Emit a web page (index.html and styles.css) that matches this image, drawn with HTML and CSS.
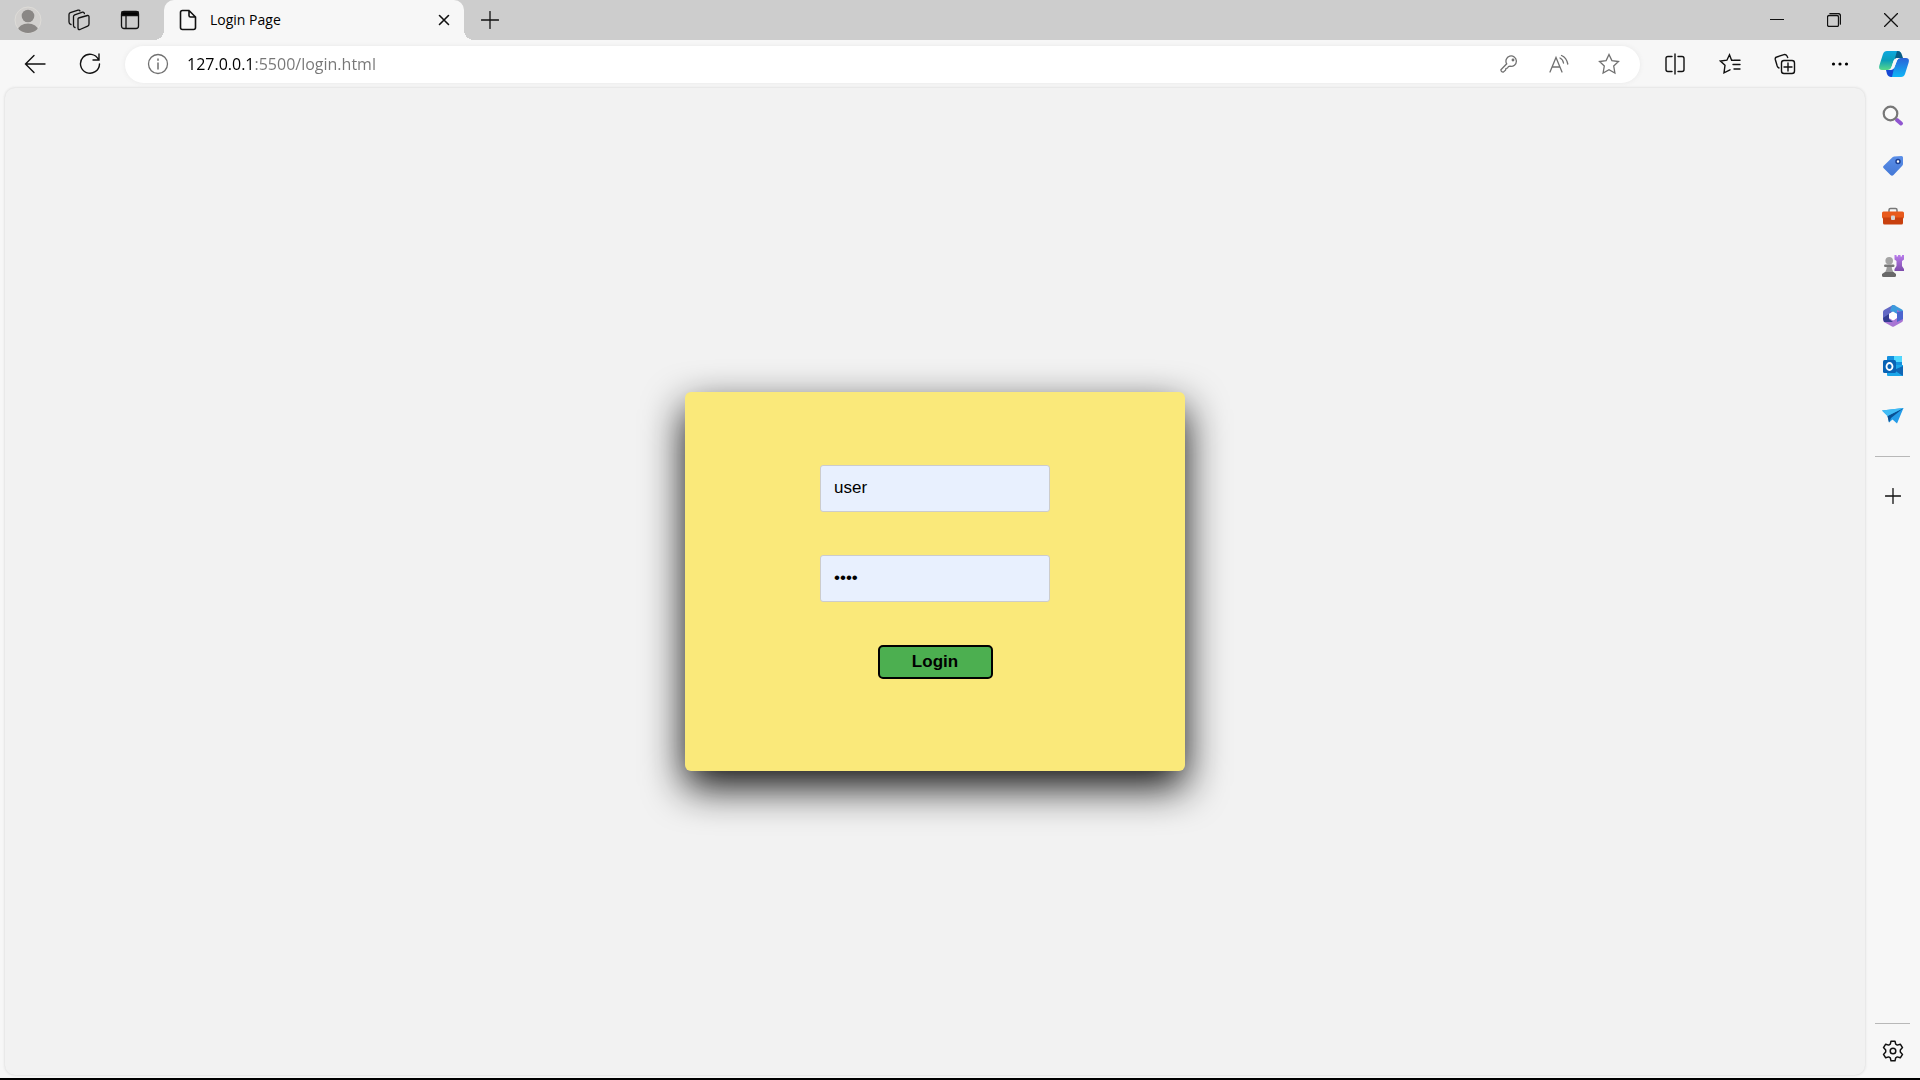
FILE: index.html
```html
<!DOCTYPE html>
<html lang="en">
<head>
<meta charset="utf-8">
<title>Login Page</title>
<link rel="stylesheet" href="styles.css">
</head>
<body>
<div class="browser">
  <header class="titlebar">
    <button class="tool avatar" aria-label="Profile">
      <svg width="28" height="28" viewBox="0 0 28 28"><defs><clipPath id="face"><circle cx="14" cy="14" r="13"/></clipPath></defs><circle cx="14" cy="14" r="13" fill="#d2d0ce" stroke="#dedcd8"/><circle cx="14" cy="10" r="6.300" fill="#8a8785"/><ellipse cx="14" cy="24" rx="10" ry="6.500" fill="#8a8785" clip-path="url(#face)"/></svg>
    </button>
    <button class="tool" aria-label="Workspaces">
      <svg class="line" width="22" height="22" viewBox="0 0 22 22"><path d="M10.500 9 19.500 6.500Q21 6.200 21 7.700V15Q21 16.500 19.700 17.100L12 20.500Q10 21 10 19V10Q10 9.200 10.500 9Z"/><path d="M7 18.500Q5.500 18.200 5.500 16.500V7.500Q5.500 6.300 6.700 5.800L14.500 3.200Q16 2.900 16.400 4.500"/><path d="M3 15.500Q1 15 1 13V5.500Q1 4.200 2.300 3.700L10 1.200Q11.600.800 12 2"/></svg>
    </button>
    <button class="tool" aria-label="Tab actions">
      <svg class="line" width="20" height="20" viewBox="0 0 20 20"><rect x="1.500" y="1.500" width="17" height="17" rx="2.500"/><path d="M2 2H18V5.500H2Z" fill="#000"/><path d="M6 6V18"/></svg>
    </button>
    <div class="tab">
      <svg class="line" width="18" height="22" viewBox="0 0 18 22"><path d="M3.500 1.500H10L16.500 8V18.500Q16.500 20.500 14.500 20.500H3.500Q1.500 20.500 1.500 18.500V3.500Q1.500 1.500 3.500 1.500ZM10 1.500V6.500Q10 8 11.500 8H16.500" stroke-width="1.600"/></svg>
      <span class="tab-title">Login Page</span>
      <button class="tab-close" aria-label="Close tab"><svg class="line" width="12" height="12" viewBox="0 0 12 12"><path d="M1.500 1.500 10.500 10.500M10.500 1.500 1.500 10.500" stroke-width="1.600"/></svg></button>
    </div>
    <button class="tool" aria-label="New tab"><svg class="line" width="18" height="18" viewBox="0 0 18 18"><path d="M9 .500V17.500M.500 9H17.500"/></svg></button>
    <div class="window-controls">
      <button aria-label="Minimize"><svg class="line" width="14" height="14" viewBox="0 0 14 14"><path d="M0 6.500H14" stroke-width="1"/></svg></button>
      <button aria-label="Restore"><svg class="line" width="14" height="14" viewBox="0 0 14 14"><rect x=".5" y="2.500" width="11" height="11" rx="1.500"/><path d="M3 .500H11Q13.500.500 13.500 3V11"/></svg></button>
      <button aria-label="Close"><svg class="line" width="14" height="14" viewBox="0 0 14 14"><path d="M.5.500 13.500 13.500M13.500.500.500 13.500"/></svg></button>
    </div>
  </header>

  <nav class="toolbar" aria-label="Browser toolbar">
    <button class="nav-button" aria-label="Back"><svg class="line" width="22" height="20" viewBox="0 0 22 20"><path d="M21 10H1.500M10 1.500 1.500 10 10 18.500" stroke-width="1.400"/></svg></button>
    <button class="nav-button" aria-label="Refresh"><svg class="line" width="22" height="22" viewBox="0 0 22 22"><path d="M19.500 6.500A9.500 9.500 0 1 0 20.500 11M20 1V7H14" stroke-width="1.400"/></svg></button>
    <div class="address">
      <button aria-label="Site information"><svg class="line gray" width="22" height="22" viewBox="0 0 22 22"><circle cx="11" cy="11" r="9.500"/><path d="M11 10V16M11 6V7.200" stroke-width="1.500"/></svg></button>
      <input class="url" type="text" value="127.0.0.1:5500/login.html" aria-label="Address">
      <button aria-label="Password key"><svg class="line gray" width="18" height="18" viewBox="0 0 18 18"><path d="M6.700 8.800A5.200 5.200 0 1 1 10 11.200L8.500 11.500 7.500 13 6 13.500 5.500 15.200 3.500 17Q1 17.300.900 14.800Z"/><circle cx="13" cy="5" r=".8"/></svg></button>
      <button aria-label="Read aloud"><svg class="line gray" width="20" height="20" viewBox="0 0 20 20"><path d="M1 18 7 3.500 13 18M3.200 13H10.800M11 4Q14 5.500 14.500 9M12.500 1.500Q17.500 3.500 18.800 10"/></svg></button>
      <button aria-label="Add to favorites"><svg class="line gray" width="22" height="22" viewBox="0 0 22 22"><path d="M11 1.500 13.900 7.600 20.500 8.500 15.700 13.100 16.900 20 11 16.800 5.100 20 6.300 13.100 1.500 8.500 8.100 7.600Z"/></svg></button>
    </div>
    <div class="toolbar-actions">
      <button aria-label="Split screen"><svg class="line" width="22" height="22" viewBox="0 0 22 22"><path d="M11 1V21M8 3.500H4Q2 3.500 2 5.500V16.500Q2 18.500 4 18.500H8M14 3.500H18Q20 3.500 20 5.500V16.500Q20 18.500 18 18.500H14" stroke-width="1.400"/></svg></button>
      <button aria-label="Favorites"><svg class="line" width="22" height="22" viewBox="0 0 22 22"><path d="M14 7.200H12.600L10.500 1.800 7.900 7.200 1.500 8.100 6 12.300 5 19.800 11 16.800M15 7.200H21M14 11.500H21M15 16H21" stroke-width="1.400"/></svg></button>
      <button aria-label="Collections"><svg class="line" width="22" height="22" viewBox="0 0 22 22"><path d="M5 15Q3.700 14.500 3.200 13L1.300 6.500Q.800 4.500 2.700 4L10 1.600Q12 1.200 13 3L13.700 4.500" stroke-width="1.400"/><rect x="7.500" y="7.500" width="13" height="13" rx="2.500" stroke-width="1.400"/><path d="M14 10V18M10 14H18" stroke-width="1.400"/></svg></button>
      <button aria-label="More"><svg width="18" height="6" viewBox="0 0 18 6"><circle cx="2.500" cy="3" r="1.600"/><circle cx="9" cy="3" r="1.600"/><circle cx="15.500" cy="3" r="1.600"/></svg></button>
    </div>
    <button class="copilot" aria-label="Copilot"><svg width="30" height="28" viewBox="0 0 30 28"><defs><linearGradient id="cpA" x2="0" y2="1"><stop stop-color="#0ea8df"/><stop offset=".5" stop-color="#0c9fb9"/><stop offset="1" stop-color="#58d989"/></linearGradient><linearGradient id="cpB" x2="0" y2="1"><stop stop-color="#2a62d8"/><stop offset="1" stop-color="#10b6f6"/></linearGradient></defs><path d="M8 1H19Q22 1 22 5L21 8H18Q15.500 8 14.500 11L12.500 17Q11.500 20 9 20H3Q-1 20 .5 15L4 4Q5 1 8 1Z" fill="url(#cpA)"/><path d="M18 1Q22 1 23 5L24 8H20Q17 8 15.500 10Z" fill="#095c86"/><path d="M21.500 8H27Q31 8 29.500 13L26 24Q25 27 22 27H12Q9 27 8 20H11Q14.500 20 15.500 17L18 10.500Q19 8 21.500 8Z" fill="url(#cpB)"/><path d="M7 20H10Q13.500 20 15 18L13 27Q9 27 8 24Z" fill="#1648d4"/><path d="M20.500 8H17.500Q15.500 8.500 14.500 11L12.500 17Q11.500 20 9 20H11Q14.500 20 15.500 17L18 10.500Q19 8 20.500 8Z" fill="#f7f7f7"/></svg></button>
  </nav>

  <div class="workspace">
    <main class="page">
      <form class="login-card">
        <input class="field" type="text" name="username" value="user" aria-label="Username">
        <input class="field" type="password" name="password" value="user" aria-label="Password">
        <button class="login-button" type="button">Login</button>
      </form>
    </main>
    <aside class="sidebar">
      <button aria-label="Search"><svg width="22" height="22" viewBox="0 0 22 22"><path d="M15 15 19 18.500" stroke="#9056d0" stroke-width="4" stroke-linecap="round"/><circle cx="8.500" cy="8.500" r="6.800" fill="#fafafa" stroke="#777" stroke-width="2.200"/></svg></button>
      <button aria-label="Shopping"><svg width="22" height="22" viewBox="0 0 22 22"><defs><linearGradient id="tg" x2="0" y2="1"><stop stop-color="#5b8fe8"/><stop offset="1" stop-color="#4478d6"/></linearGradient></defs><path d="M12 1.500 19.500 1Q21 1 21 2.500V9Q21 10 20 11L11.500 20Q10 21.500 8.500 20L1.500 13Q.500 12 1.500 11L10.500 2.200Z" fill="url(#tg)"/><circle cx="16" cy="6.500" r="2" fill="#fff" stroke="#1c3f91" stroke-width="1.500"/></svg></button>
      <button aria-label="Tools"><svg width="22" height="18" viewBox="0 0 22 18"><path d="M7 5V3Q7 1.500 8.500 1.500H13.500Q15 1.500 15 3V5" fill="none" stroke="#777" stroke-width="1.500"/><rect y="4.500" width="22" height="7" rx="1.500" fill="#e85a1c"/><path d="M1 10.500H21V16Q21 17.500 19.500 17.500H2.500Q1 17.500 1 16Z" fill="#c8400e"/><rect x="9" y="8.500" width="4" height="4.500" rx="1" fill="#d4d4d4"/></svg></button>
      <button aria-label="Games"><svg width="22" height="22" viewBox="0 0 22 22"><defs><linearGradient id="rook" x2="0" y2="1"><stop stop-color="#b97cec"/><stop offset="1" stop-color="#7d4cab"/></linearGradient></defs><path d="M12.500 0H14.500V1.500H16V0H18.500V1.500H20V0H22V4.500L20 6V11L22 14V16H12.500V14L14.500 11V6L12.500 4.500Z" fill="url(#rook)"/><circle cx="7.200" cy="5.800" r="3.800" fill="#a4a4a4"/><path d="M5 10H9.500L10 14 11.500 17.500H3L4.500 14Z" fill="#9a9a9a"/><rect x="2" y="9.500" width="10.500" height="2.500" rx="1.200" fill="#777"/><path d="M3 17H11.500L14 19V20.500Q14 22 12.500 22H1.500Q0 22 0 20.500V19Z" fill="#686868"/></svg></button>
      <button aria-label="Microsoft 365"><svg width="22" height="22" viewBox="0 0 22 22"><path d="M11 0 2 5Q1 6 1 7V15L7 18V9L14 5V1Z" fill="#6268c4"/><path d="M10 0Q11-.5 12 0L20 4.500Q21 5 21 6.500V14L15 13V9L8 6Z" fill="#3d9bdd"/><path d="M21 8V15Q21 16.500 20 17L12 21.500Q11 22 10 21.500L2 17 1 15 8 13 12 15 15 12V5Z" fill="#a875d4"/><path d="M1 13 7 9V14L11 17 2 17Z" fill="#343d91"/><path d="M15 7 21 6V14L15 17Z" fill="#4c65cf"/><path d="M11 6.500 15 9V13L11 15.500 7 13V9Z" fill="#fff"/></svg></button>
      <button aria-label="Outlook"><svg width="22" height="22" viewBox="0 0 22 22"><path d="M6 1H19Q20 1 20 2V12H5V2Q5 1 6 1Z" fill="#1490df"/><path d="M12 1H19Q20 1 20 2V7H12Z" fill="#50d9ff"/><path d="M5 10H21V20Q21 21 20 21H6Q5 21 5 20Z" fill="#1ba6e9"/><path d="M21 11 12 15 21 21Z" fill="#1066b5"/><rect x="1" y="5" width="13" height="13" rx="1.500" fill="#0963b5"/><ellipse cx="7.500" cy="11.500" rx="3" ry="3.500" fill="none" stroke="#fff" stroke-width="1.800"/></svg></button>
      <button aria-label="Drop"><svg width="22" height="18" viewBox="0 0 22 18"><path d="M0 3.500 21.500 1 15 16.500 10.500 12.500 7 15.500 5.500 9Z" fill="#249ce8"/><path d="M5.500 9 21.500 1 9 11 7 15.500Z" fill="#0a5093"/><path d="M0 3.500 21.500 1 5.500 9Z" fill="#41bcf5"/></svg></button>
      <hr>
      <button aria-label="Customize"><svg class="line" width="16" height="16" viewBox="0 0 16 16"><path d="M8 .500V15.500M.500 8H15.500"/></svg></button>
      <div class="sidebar-bottom">
        <hr>
        <button aria-label="Settings"><svg class="line" width="22" height="22" viewBox="0 0 22 22"><path d="M9 1.200H13L13.700 4.200 15.300 5.100 18.300 4.200 20.500 7.600 18.300 9.900V12.100L20.500 14.400 18.300 17.800 15.300 16.900 13.700 17.800 13 20.800H9L8.300 17.800 6.700 16.900 3.700 17.800 1.500 14.400 3.700 12.100V9.900L1.500 7.600 3.700 4.200 6.700 5.100 8.300 4.200Z" stroke-width="1.500" stroke-linejoin="round"/><circle cx="11" cy="11" r="2.800" stroke-width="1.500"/></svg></button>
      </div>
    </aside>
  </div>
</div>
</body>
</html>
```
FILE: styles.css
```css
* {
  box-sizing: border-box;
}

body {
  margin: 0;
  background: #f7f7f7;
  color: #000;
  font-family: "Open Sans", "Noto Sans", sans-serif;
}

button {
  display: flex;
  align-items: center;
  justify-content: center;
  margin: 0;
  padding: 0;
  border: 0;
  background: none;
  color: inherit;
}

svg {
  display: block;
  flex: none;
}

.line {
  fill: none;
  stroke: #111;
  stroke-width: 1.3;
  stroke-linecap: round;
}

.gray {
  stroke: #707070;
}

.browser {
  display: flex;
  flex-direction: column;
  min-height: 100vh;
  border-bottom: 2px solid #000;
}

/* Title bar */
.titlebar {
  display: flex;
  height: 40px;
  padding: 0 1px 0 2px;
  background: #cdcdcd;
}

.tool {
  width: 51px;
}

.tab {
  position: relative;
  display: flex;
  align-items: center;
  width: 300px;
  margin-left: 9px;
  padding: 0 12px 0 15px;
  border-radius: 10px 10px 0 0;
  background: #f7f7f7;
}

.tab::before,
.tab::after {
  content: "";
  position: absolute;
  bottom: 0;
  width: 10px;
  height: 10px;
}

.tab::before {
  right: 100%;
  background: radial-gradient(circle at 0 0, #cdcdcd 10px, #f7f7f7 10px);
}

.tab::after {
  left: 100%;
  background: radial-gradient(circle at 100% 0, #cdcdcd 10px, #f7f7f7 10px);
}

.tab-title {
  flex: 1;
  margin-left: 13px;
  font-size: 14px;
  line-height: 20px;
}

.tab-close {
  width: 16px;
  height: 40px;
}

.window-controls {
  display: flex;
  margin-left: auto;
}

.window-controls button {
  width: 57px;
}

/* Toolbar */
.toolbar {
  display: flex;
  align-items: center;
  height: 48px;
  padding-left: 7px;
}

.nav-button {
  width: 55px;
  height: 40px;
}

.address {
  display: flex;
  align-items: center;
  flex: 1;
  height: 37px;
  margin-left: 8px;
  padding: 0 6px 0 16px;
  border-radius: 19px;
  background: #fff;
  box-shadow: 0 0 5px #e8e8e8;
}

.address button {
  width: 50px;
  height: 36px;
}

.address button:first-child {
  width: 34px;
}

/* The host part of the address is black and the rest of it is gray. */
.url {
  flex: 1;
  min-width: 0;
  padding: 0;
  margin-left: 12px;
  border: 0;
  outline: 0;
  background: linear-gradient(to right, #000 67px, #767676 67px);
  background-clip: text;
  -webkit-background-clip: text;
  color: transparent;
  font-family: inherit;
  font-size: 16px;
  line-height: 24px;
}

.toolbar-actions {
  display: flex;
  margin-left: 7px;
}

.toolbar-actions button {
  width: 55px;
  height: 40px;
}

.copilot {
  width: 53px;
  height: 40px;
}

/* Page area and sidebar */
.workspace {
  display: flex;
  flex: 1;
}

.page {
  display: flex;
  align-items: center;
  justify-content: center;
  flex: 1;
  margin: 0 0 3px 5px;
  border-radius: 10px;
  background: #f2f2f2;
  box-shadow: 0 0 3px #d0d0d0;
}

.login-card {
  display: flex;
  flex-direction: column;
  align-items: center;
  gap: 43px;
  width: 500px;
  padding: 73px 20px 92px;
  border-radius: 6px;
  background: #fae97a;
  box-shadow: 0 16px 40px rgba(0, 0, 0, 0.94);
  font-family: "Liberation Sans", Arial, sans-serif;
}

.field {
  width: 230px;
  height: 47px;
  padding: 0 13px 2px;
  border: 1px solid #ccc;
  border-radius: 3px;
  background: #e8f0fe;
  color: #000;
  font-family: inherit;
  font-size: 17px;
}

.login-button {
  width: 115px;
  height: 34px;
  border: 2px solid #000;
  border-radius: 5px;
  background: #4caf50;
  font-family: inherit;
  font-size: 17px;
  font-weight: bold;
}

.sidebar {
  display: flex;
  flex-direction: column;
  align-items: center;
  width: 55px;
  padding: 3px 0 2px;
}

.sidebar button {
  width: 48px;
  height: 50px;
}

.sidebar hr {
  width: 35px;
  height: 1px;
  margin: 15px 0 14px;
  border: 0;
  background: #b8b8b8;
}

.sidebar-bottom {
  display: flex;
  flex-direction: column;
  align-items: center;
  margin-top: auto;
}

.sidebar-bottom hr {
  margin: 0 0 2px;
}
```
